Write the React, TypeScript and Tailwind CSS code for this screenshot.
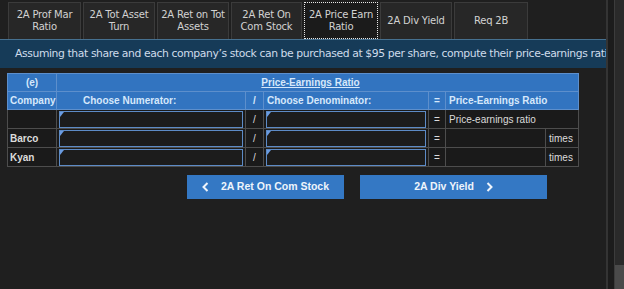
import React from 'react';

const tabs = [
  { lines: ['2A Prof Mar', 'Ratio'], w: 'w-[73px]' },
  { lines: ['2A Tot Asset', 'Turn'], w: 'w-[72px]' },
  { lines: ['2A Ret on Tot', 'Assets'], w: 'w-[72px]' },
  { lines: ['2A Ret On', 'Com Stock'], w: 'w-[71px]' },
  { lines: ['2A Price Earn', 'Ratio'], w: 'w-[74px]', active: true },
  { lines: ['2A Div Yield'], w: 'w-[72px]' },
  { lines: ['Req 2B'], w: 'w-[74px]' },
];

const InputBox = () => (
  <div className="relative h-[17px] mx-[2px] bg-[#1c1c1c] border border-[#5d8bc6]">
    <span className="absolute left-0 top-0 w-0 h-0 border-t-[5px] border-t-[#6a9be0] border-r-[4px] border-r-transparent" />
  </div>
);

const Chevron = ({ dir }: { dir: 'left' | 'right' }) => (
  <svg width="7" height="10" viewBox="0 0 7 10" fill="none">
    <path
      d={dir === 'left' ? 'M5.5 1 L1.5 5 L5.5 9' : 'M1.5 1 L5.5 5 L1.5 9'}
      stroke="#eef4fb"
      strokeWidth="2"
    />
  </svg>
);

const rows = ['', 'Barco', 'Kyan'];

const App = () => {
  return (
    <div className="w-[624px] h-[289px] bg-[#1f1f1f] flex overflow-hidden" style={{ fontFamily: '"Liberation Sans", Arial, sans-serif' }}>
      <div className="w-[606px] flex flex-col">
        <div className="flex gap-[2px] pl-[8px] pt-[2px]">
          {tabs.map((t) => (
            <div
              key={t.lines.join(' ')}
              className={`${t.w} h-[37px] flex flex-col items-center justify-center text-center whitespace-nowrap text-[10px] leading-[12px] tracking-[-0.2px] text-[#d2d2d2] ${
                t.active ? 'bg-[#1b1b1b] border border-dotted border-[#e8e8e8]' : 'bg-[#272727] border border-[#3b3b3b] border-b-0'
              }`}
              style={{ fontFamily: '"DejaVu Sans", Verdana, sans-serif' }}
            >
              {t.lines.map((l) => (
                <span key={l}>{l}</span>
              ))}
            </div>
          ))}
        </div>
        <div
          className="h-[29px] bg-[#163b58] border-t border-[#46708f] flex items-center pl-[15px] whitespace-nowrap overflow-hidden text-[10.8px] tracking-[-0.4px] text-[#cfdceb]"
          style={{ fontFamily: '"DejaVu Sans", Verdana, sans-serif' }}
        >
          Assuming that share and each company’s stock can be purchased at $95 per share, compute their price-earnings ratios.
        </div>
        <div className="pl-[7px] pt-[5px]">
          <table className="table-fixed border-collapse w-[571px] text-[10px] text-[#dcdcdc]">
            <colgroup>
              <col className="w-[49px]" />
              <col className="w-[189px]" />
              <col className="w-[18px]" />
              <col className="w-[165px]" />
              <col className="w-[17px]" />
              <col className="w-[100px]" />
              <col className="w-[33px]" />
            </colgroup>
            <tbody>
              <tr className="h-[18px] bg-[#3274c0] text-[#d6e8fb] font-bold">
                <td className="border border-[#5d8fcc] text-center">(e)</td>
                <td colSpan={6} className="border border-[#5d8fcc] text-center underline pr-[14px]">Price-Earnings Ratio</td>
              </tr>
              <tr className="h-[18px] bg-[#3274c0] text-[#d6e8fb] font-bold">
                <td className="border border-[#5d8fcc] pl-[2px]">Company</td>
                <td className="border border-[#5d8fcc] pl-[26px]">Choose Numerator:</td>
                <td className="border border-[#5d8fcc] text-center">/</td>
                <td className="border border-[#5d8fcc] pl-[3px]">Choose Denominator:</td>
                <td className="border border-[#5d8fcc] text-center">=</td>
                <td colSpan={2} className="border border-[#5d8fcc] pl-[3px]">Price-Earnings Ratio</td>
              </tr>
              {rows.map((r, i) => (
                <tr key={i} className="h-[19px] bg-[#1a1a1a]">
                  <td className="border border-[#4d4d4d] pl-[2px] font-bold">{r}</td>
                  <td className="border border-[#4d4d4d] p-0"><InputBox /></td>
                  <td className="border border-[#4d4d4d] text-center">/</td>
                  <td className="border border-[#4d4d4d] p-0"><InputBox /></td>
                  <td className="border border-[#4d4d4d] text-center">=</td>
                  {i === 0 ? (
                    <td colSpan={2} className="border border-[#4d4d4d] pl-[3px]">Price-earnings ratio</td>
                  ) : (
                    <>
                      <td className="border border-[#4d4d4d]"></td>
                      <td className="border border-[#4d4d4d] pl-[3px]">times</td>
                    </>
                  )}
                </tr>
              ))}
            </tbody>
          </table>
        </div>
        <div className="flex gap-[16px] pl-[187px] pt-[8px]">
          <button className="w-[157px] h-[24px] bg-[#3478c4] text-[#eef4fb] text-[10.5px] font-bold flex items-center justify-center gap-[12px]">
            <Chevron dir="left" />
            <span>2A Ret On Com Stock</span>
          </button>
          <button className="w-[187px] h-[24px] bg-[#3478c4] text-[#eef4fb] text-[10.5px] font-bold flex items-center justify-center gap-[12px]">
            <span>2A Div Yield</span>
            <Chevron dir="right" />
          </button>
        </div>
      </div>
      <div className="w-[18px] flex">
        <div className="w-[2px] bg-[#343434]" />
        <div className="w-[6px] bg-[#1c1c1c]" />
        <div className="flex-1 bg-[#2a2a2a] border-l border-[#3c3c3c] flex flex-col justify-end">
          <div className="h-[24px] bg-[#4a4a4a]" />
        </div>
      </div>
    </div>
  );
};

export default App;
